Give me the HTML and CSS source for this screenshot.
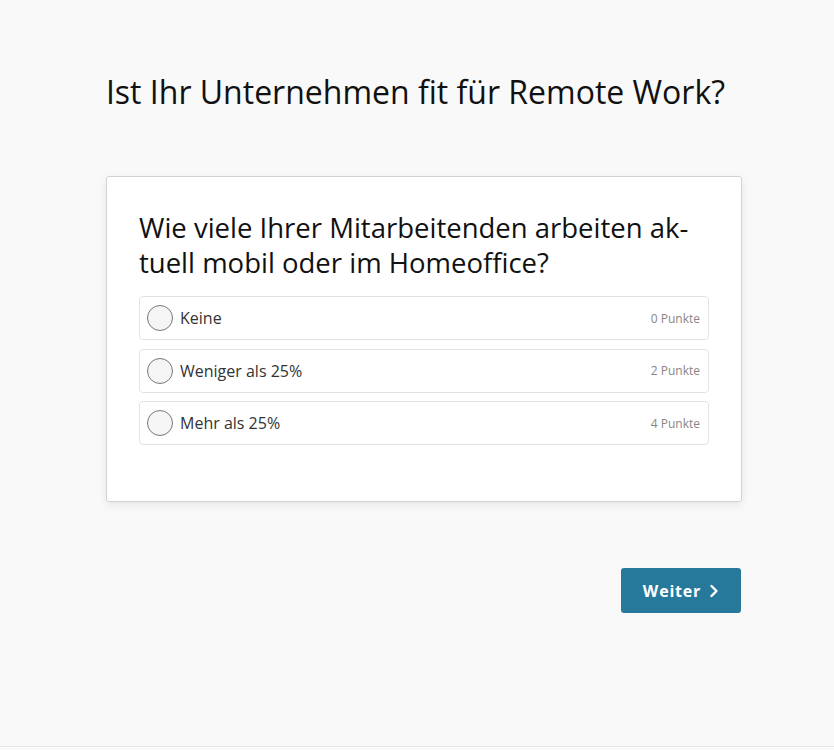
FILE: index.html
```html
<!DOCTYPE html>
<html lang="de">
<head>
<meta charset="utf-8">
<title>Remote Work Check</title>
<link rel="stylesheet" href="styles.css">
</head>
<body>
<main class="page">
  <h1 class="title">Ist Ihr Unternehmen fit für Remote Work?</h1>
  <div class="content">
    <section class="card">
      <h2 class="question">Wie viele Ihrer Mitarbeitenden arbeiten ak-<br>tuell mobil oder im Homeoffice?</h2>
      <ul class="options">
        <li class="option"><span class="radio"></span><span class="label">Keine</span><span class="points">0 Punkte</span></li>
        <li class="option"><span class="radio"></span><span class="label">Weniger als 25%</span><span class="points">2 Punkte</span></li>
        <li class="option"><span class="radio"></span><span class="label">Mehr als 25%</span><span class="points">4 Punkte</span></li>
      </ul>
    </section>
    <div class="actions">
      <button class="next">Weiter <svg class="chev" viewBox="0 0 10 14" width="10" height="14"><path d="M2.5 2 L7.5 7 L2.5 12" fill="none" stroke="#fff" stroke-width="2.4" stroke-linecap="round" stroke-linejoin="round"/></svg></button>
    </div>
  </div>
</main>
</body>
</html>
```

FILE: styles.css
```css
html, body {
  margin: 0;
  padding: 0;
}
body {
  background: #f9f9f9;
  font-family: "Open Sans", "Liberation Sans", sans-serif;
  color: #111;
  border-bottom: 1px solid #e6e6e6;
  box-sizing: border-box;
  height: 747px;
}
.page {
  padding-top: 70px;
  display: flex;
  flex-direction: column;
}
.title {
  margin: 0;
  padding-right: 3px;
  font-size: 32px;
  font-weight: 400;
  line-height: 44px;
  text-align: center;
  color: #111;
}
.content {
  width: 636px;
  margin-left: calc(50% - 311px);
  display: flex;
  flex-direction: column;
}
.card {
  margin-top: 62px;
  background: #fff;
  border: 1px solid #d2d2d2;
  border-radius: 3px;
  box-shadow: 0 3px 10px rgba(0,0,0,0.08);
  padding: 33px 32px 56px 32px;
}
.question {
  margin: 0 0 16px 0;
  font-size: 27.5px;
  font-weight: 400;
  line-height: 35px;
  color: #111;
}
.options {
  list-style: none;
  margin: 0;
  padding: 0;
  display: flex;
  flex-direction: column;
  gap: 8.5px;
}
.option {
  box-sizing: border-box;
  height: 44px;
  border: 1px solid #e3e3e3;
  border-radius: 4px;
  display: flex;
  align-items: center;
  padding: 0 8px 0 7px;
}
.radio {
  width: 24px;
  height: 24px;
  border: 1px solid #777;
  border-radius: 50%;
  background: #f5f5f5;
  flex: none;
}
.label {
  margin-left: 7px;
  font-size: 16px;
  color: #333;
  flex: 1;
}
.points {
  font-size: 12px;
  color: #8a8585;
}
.actions {
  margin-top: 66px;
  display: flex;
  justify-content: flex-end;
}
.next {
  width: 120px;
  height: 45px;
  margin-right: 1px;
  border: none;
  border-radius: 3px;
  background: #27799b;
  color: #fff;
  font-family: "Open Sans", "Liberation Sans", sans-serif;
  font-weight: 700;
  font-size: 16px;
  letter-spacing: 0.8px;
  display: flex;
  align-items: center;
  justify-content: center;
  gap: 8px;
  padding: 0;
}
.chev {
  display: block;
}
```
